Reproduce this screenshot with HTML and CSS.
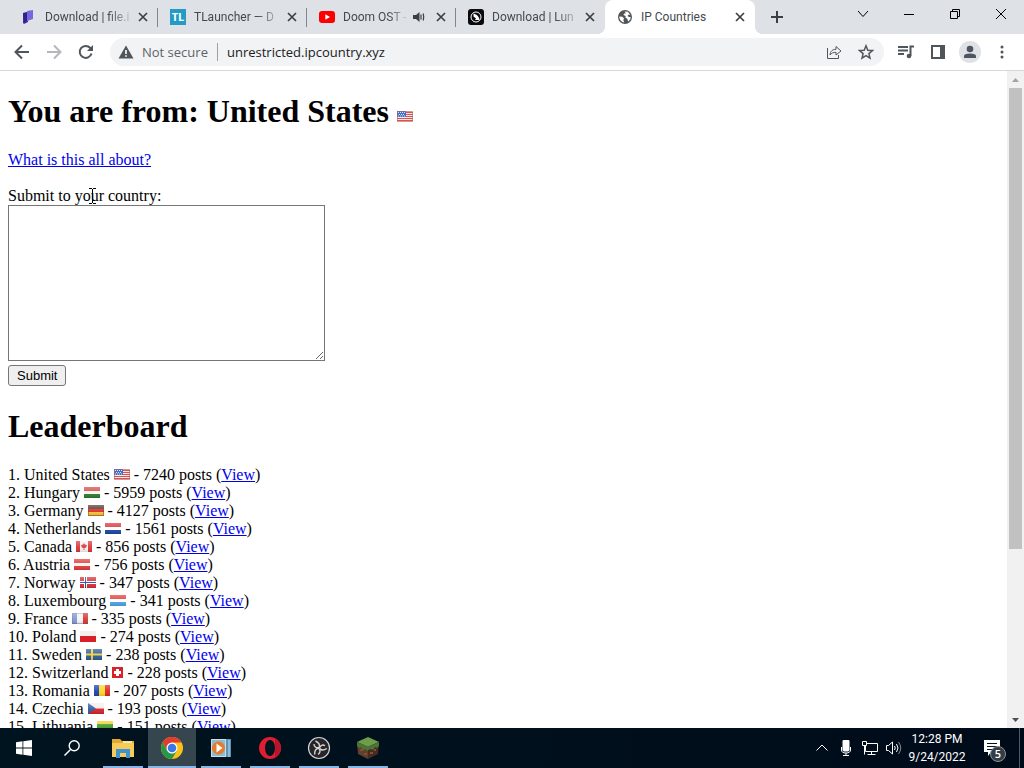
FILE: index.html
```html
<!DOCTYPE html>
<html lang="en">
  <head>
    <meta charset="utf-8">
    <title>IP Countries</title>
    <link rel="stylesheet" href="styles.css">
  </head>
  <body>
    <!-- flags and shared icons -->
    <svg class="sprite" width="0" height="0" aria-hidden="true">
      <defs>
        <linearGradient id="gloss" x1="0" y1="0" x2="0" y2="1">
          <stop offset="0" stop-color="#fff" stop-opacity=".3"/>
          <stop offset=".6" stop-color="#fff" stop-opacity=".05"/>
          <stop offset="1" stop-color="#000" stop-opacity=".12"/>
        </linearGradient>
        <symbol id="close" viewBox="0 0 16 16"><path d="M4 4l8 8M12 4l-8 8" fill="none" stroke="#3c4043" stroke-width="1.7"/></symbol>
        <symbol id="us" viewBox="0 0 16 11">
          <path fill="#f6e9e8" d="M0 0h16v11H0z"/>
          <path d="M0 1.5h16M0 3.5h16M0 5.5h16M0 7.5h16M0 9.5h16" stroke="#e0514d"/>
          <path fill="#3f6fc8" d="M0 0h9v6H0z"/>
          <path d="M1 1.5h7M2 3.5h6M1 5h7" stroke="#dbe6fa" stroke-dasharray="1 1"/>
          <path d="M.5 .5h15v10H.5z" fill="none" stroke="#a76b68" stroke-opacity=".6"/>
        </symbol>
        <symbol id="hu" viewBox="0 0 16 11"><path fill="#d94a43" d="M0 0h16v4H0z"/><path fill="#f4f4f0" d="M0 4h16v3H0z"/><path fill="#2d7a2c" d="M0 7h16v4H0z"/></symbol>
        <symbol id="de" viewBox="0 0 16 11"><path fill="#4a3c38" d="M0 0h16v4H0z"/><path fill="#e02a20" d="M0 4h16v4H0z"/><path fill="#f5c431" d="M0 7h16v4H0z"/><path fill="none" stroke="#8b2a22" stroke-opacity=".5" d="M.5 .5h15v10H.5z"/></symbol>
        <symbol id="nl" viewBox="0 0 16 11"><path fill="#d9343a" d="M0 0h16v4H0z"/><path fill="#fff" d="M0 4h16v3H0z"/><path fill="#1f44a4" d="M0 7h16v4H0z"/></symbol>
        <symbol id="ca" viewBox="0 0 16 11"><path fill="#fbf1f0" d="M0 0h16v11H0z"/><path fill="#d8373b" d="M0 0h4v11H0zM12 0h4v11h-4zM8 2l1 1.5L11 4l-.8 2.5L8.4 7v2h-.8V7L5.8 6.500 5 4l2-.5z"/></symbol>
        <symbol id="at" viewBox="0 0 16 11"><path fill="#e03a3a" d="M0 0h16v4H0zM0 7h16v4H0z"/><path fill="#fdf3f1" d="M0 4h16v3H0z"/></symbol>
        <symbol id="no" viewBox="0 0 16 11"><path fill="#d6303a" d="M0 0h16v11H0z"/><path fill="#fff" d="M4 0h3v11H4zM0 4h16v3H0z"/><path fill="#2a4a9c" d="M5 0h1v11H5zM0 5h16v1H0z"/></symbol>
        <symbol id="lu" viewBox="0 0 16 11"><path fill="#e33b3b" d="M0 0h16v4H0z"/><path fill="#fff" d="M0 4h16v3H0z"/><path fill="#4da3e6" d="M0 7h16v4H0z"/></symbol>
        <symbol id="fr" viewBox="0 0 16 11"><path fill="#7f98d4" d="M0 0h5v11H0z"/><path fill="#f6f3f5" d="M5 0h6v11H5z"/><path fill="#e0332b" d="M11 0h5v11h-5z"/><path fill="none" stroke="#6e6a90" stroke-opacity=".4" d="M.5 .5h15v10H.5z"/></symbol>
        <symbol id="pl" viewBox="0 0 16 11"><path fill="#f4efee" d="M0 0h16v5H0z"/><path fill="#d8202c" d="M0 5h16v6H0z"/></symbol>
        <symbol id="se" viewBox="0 0 16 11"><path fill="#2b5d96" d="M0 0h16v11H0z"/><path fill="#f0cf3c" d="M5 0h2v11H5zM0 4.500h16v2H0z"/></symbol>
        <symbol id="ch" viewBox="0 0 11 11"><path fill="#d8232b" d="M0 0h11v11H0z"/><path fill="#fff" d="M4 2h3v2h2v3H7v2H4V7H2V4h2z"/></symbol>
        <symbol id="ro" viewBox="0 0 16 11"><path fill="#1e40b4" d="M0 0h5v11H0z"/><path fill="#f8d820" d="M5 0h6v11H5z"/><path fill="#dc2420" d="M11 0h5v11h-5z"/></symbol>
        <symbol id="cz" viewBox="0 0 16 11"><path fill="#f3eeee" d="M0 0h16v5.500H0z"/><path fill="#d4222b" d="M0 5.500h16V11H0z"/><path fill="#2f5aa0" d="M0 0l8 5.500L0 11z"/></symbol>
        <symbol id="lt" viewBox="0 0 16 11"><path fill="#f2cf20" d="M0 0h16v4H0z"/><path fill="#3d9a28" d="M0 3h16v5H0z"/><path fill="#c83030" d="M0 8h16v3H0z"/></symbol>
        <symbol id="shine" viewBox="0 0 16 11"><path fill="url(#gloss)" d="M0 0h16v11H0z"/></symbol>
      </defs>
    </svg>

    <header class="browser">
      <div class="tab-strip">
        <div class="tab">
          <svg class="favicon" viewBox="0 0 16 16"><path fill="#4532a8" d="M2 4l5-1v10l-4 2-1-1z"/><path fill="#7468dc" d="M6 2l6-1v9l-6 2z"/><path fill="#281875" d="M2 4l4-1v9l-3 2z" opacity=".6"/></svg>
          <span class="tab-title">Download | file.i</span>
          <button class="tab-close" aria-label="Close tab"><svg><use href="#close"/></svg></button>
        </div>
        <div class="tab">
          <span class="favicon tl">TL</span>
          <span class="tab-title">TLauncher — D</span>
          <button class="tab-close" aria-label="Close tab"><svg><use href="#close"/></svg></button>
        </div>
        <div class="tab">
          <svg class="favicon" viewBox="0 0 16 16"><rect y="2" width="16" height="12" rx="3" fill="#f00"/><path fill="#fff" d="M6.300 5.200v5.600L11 8z"/></svg>
          <span class="tab-title">Doom OST -</span>
          <svg class="audio" viewBox="0 0 12 12"><path fill="#3c4043" d="M0 4h3l3.500-3v10L3 8H0z"/><path fill="none" stroke="#3c4043" stroke-width="1.200" d="M8 3.500v5M10.200 2.500q1 3.500 0 7"/></svg>
          <button class="tab-close" aria-label="Close tab"><svg><use href="#close"/></svg></button>
        </div>
        <div class="tab">
          <svg class="favicon" viewBox="0 0 16 16"><rect width="16" height="16" rx="3" fill="#0b0b0d"/><circle cx="8" cy="8" r="5" fill="none" stroke="#fff"/><path fill="#fff" d="M5.500 4.500L8 5.500q3 1.500 3.500 5.500H7l1-1.500-2.500-2z"/></svg>
          <span class="tab-title">Download | Lun</span>
          <button class="tab-close" aria-label="Close tab"><svg><use href="#close"/></svg></button>
        </div>
        <div class="tab active">
          <svg class="favicon" viewBox="0 0 16 16"><circle cx="8" cy="8" r="7" fill="#50555a"/><path fill="#fff" d="M2.300 7.500l3 .3 1.800 1.700-.8 1.600.9 2.300C4.500 13 2.300 11 2.300 7.500zM7.500 2.500l3.300.2 2.700 3.300-1.700-.4-1.300 1.300 1.500 1 1.700.2-.5 2.300-2 2-.9-2.600-2-1.300.5-1.600-2.400-.8.9-1.600 1.700-.2z"/></svg>
          <span class="tab-title">IP Countries</span>
          <button class="tab-close" aria-label="Close tab"><svg><use href="#close"/></svg></button>
        </div>
        <button class="new-tab" aria-label="New tab"><svg viewBox="0 0 16 16"><path d="M8 2v12M2 8h12" stroke="#3c4043" stroke-width="2"/></svg></button>
        <div class="window-controls">
          <button aria-label="Search tabs"><svg viewBox="0 0 12 12"><path d="M1 3l5 5.500L11 3"/></svg></button>
          <button aria-label="Minimize"><svg viewBox="0 0 12 12"><path d="M1 6.500h10"/></svg></button>
          <button aria-label="Restore"><svg viewBox="0 0 12 12"><path d="M1.500 3.500h7v7h-7zM3.500 3.500v-2h7v7h-2"/></svg></button>
          <button aria-label="Close"><svg viewBox="0 0 12 12"><path d="M1 1l10 10M11 1L1 11"/></svg></button>
        </div>
      </div>

      <div class="toolbar">
        <button class="tool" aria-label="Back"><svg viewBox="0 0 16 16"><path d="M15 8H2M8 1.500L1.500 8 8 14.500"/></svg></button>
        <button class="tool disabled" aria-label="Forward"><svg viewBox="0 0 16 16"><path d="M1 8h13M8 1.500L14.500 8 8 14.500"/></svg></button>
        <button class="tool" aria-label="Reload"><svg viewBox="0 0 16 16"><path d="M13.500 9.500A6 6 0 1 1 12.300 4L14 5.500"/><path class="solid" d="M15 1v6H9z"/></svg></button>
        <div class="omnibox">
          <svg class="warning" viewBox="0 0 16 16"><path fill="#50555a" d="M8 1.500L15.500 14.500H.5z"/><path stroke="#fff" stroke-width="1.600" d="M8 6v4M8 11.200v1.600"/></svg>
          <span class="security">Not secure</span>
          <input class="url" type="text" aria-label="Address" value="unrestricted.ipcountry.xyz">
          <button class="tool" aria-label="Share"><svg class="thin" viewBox="0 0 16 16"><path d="M1.500 4v10.500h11V11M4 11c.3-4 2.700-5.700 6-5.700V2.500L15 7l-5 4V8.300C7.500 8.300 5.500 9 4 11z"/></svg></button>
          <button class="tool" aria-label="Bookmark"><svg class="medium" viewBox="0 0 16 16"><path d="M8 1.800l1.800 4.400 4.700.3-3.600 3.100 1.100 4.600L8 11.700l-4 2.500 1.100-4.600L1.500 6.500l4.700-.3z"/></svg></button>
        </div>
        <button class="tool" aria-label="Media"><svg viewBox="0 0 16 16"><path d="M0 3h10M0 6.500h10M0 10h6M12.500 12V2.500H16"/><circle class="solid" cx="11" cy="12" r="2.300"/></svg></button>
        <button class="tool" aria-label="Side panel"><svg viewBox="0 0 16 16"><path d="M2 2h12v12H2z"/><path class="solid" d="M10 2h4v12h-4z"/></svg></button>
        <button class="tool avatar" aria-label="Profile"><svg viewBox="0 0 22 22"><circle cx="11" cy="11" r="11" fill="#dee1e6"/><circle cx="11" cy="8" r="3.300" fill="#4c5561"/><path fill="#4c5561" d="M5 17v-2q0-2.500 6-2.500t6 2.500v2z"/></svg></button>
        <button class="tool" aria-label="Menu"><svg viewBox="0 0 16 16"><g class="solid"><circle cx="8" cy="3" r="1.500"/><circle cx="8" cy="8" r="1.500"/><circle cx="8" cy="13" r="1.500"/></g></svg></button>
      </div>
    </header>

    <div class="viewport">
      <main class="page">
        <h1>You are from: United States <svg class="flag"><use href="#us"/></svg></h1>
        <p class="about"><a href="#about">What is this all about?</a></p>
        <form>
          <label for="post">Submit to your country:</label>
          <textarea id="post"></textarea>
          <button class="submit" type="button">Submit</button>
        </form>
        <h1>Leaderboard</h1>
        <ul class="leaderboard">
          <li>1. United States <svg class="flag"><use href="#us"/></svg> - 7240 posts (<a href="#us-posts">View</a>)</li>
          <li>2. Hungary <svg class="flag"><use href="#hu"/><use href="#shine"/></svg> - 5959 posts (<a href="#hu-posts">View</a>)</li>
          <li>3. Germany <svg class="flag"><use href="#de"/><use href="#shine"/></svg> - 4127 posts (<a href="#de-posts">View</a>)</li>
          <li>4. Netherlands <svg class="flag"><use href="#nl"/><use href="#shine"/></svg> - 1561 posts (<a href="#nl-posts">View</a>)</li>
          <li>5. Canada <svg class="flag"><use href="#ca"/><use href="#shine"/></svg> - 856 posts (<a href="#ca-posts">View</a>)</li>
          <li>6. Austria <svg class="flag"><use href="#at"/><use href="#shine"/></svg> - 756 posts (<a href="#at-posts">View</a>)</li>
          <li>7. Norway <svg class="flag"><use href="#no"/><use href="#shine"/></svg> - 347 posts (<a href="#no-posts">View</a>)</li>
          <li>8. Luxembourg <svg class="flag"><use href="#lu"/><use href="#shine"/></svg> - 341 posts (<a href="#lu-posts">View</a>)</li>
          <li>9. France <svg class="flag"><use href="#fr"/><use href="#shine"/></svg> - 335 posts (<a href="#fr-posts">View</a>)</li>
          <li>10. Poland <svg class="flag"><use href="#pl"/></svg> - 274 posts (<a href="#pl-posts">View</a>)</li>
          <li>11. Sweden <svg class="flag"><use href="#se"/><use href="#shine"/></svg> - 238 posts (<a href="#se-posts">View</a>)</li>
          <li>12. Switzerland <svg class="flag square"><use href="#ch"/></svg> - 228 posts (<a href="#ch-posts">View</a>)</li>
          <li>13. Romania <svg class="flag"><use href="#ro"/><use href="#shine"/></svg> - 207 posts (<a href="#ro-posts">View</a>)</li>
          <li>14. Czechia <svg class="flag"><use href="#cz"/><use href="#shine"/></svg> - 193 posts (<a href="#cz-posts">View</a>)</li>
          <li>15. Lithuania <svg class="flag"><use href="#lt"/><use href="#shine"/></svg> - 151 posts (<a href="#lt-posts">View</a>)</li>
        </ul>
        <svg class="cursor" viewBox="0 0 7 16"><path d="M0 .5h3M4 .5h3M0 15.500h3M4 15.500h3M3.500 1v14" fill="none" stroke="#000"/></svg>
      </main>
      <div class="scrollbar">
        <svg class="arrow" viewBox="0 0 17 17"><path fill="#a3a3a3" d="M5 11h7L8.500 7z"/></svg>
        <div class="track"><div class="thumb"></div></div>
        <svg class="arrow" viewBox="0 0 17 17"><path fill="#505050" d="M5 7h7l-3.500 4z"/></svg>
      </div>
    </div>

    <footer class="taskbar">
      <button aria-label="Start"><svg class="start" viewBox="0 0 16 16"><path fill="#fff" d="M0 2.300l6.500-1v6.300H0zM7.300 1.200L16 0v7.600H7.300zM0 8.400h6.500v6.300L0 13.700zM7.300 8.400H16V16l-8.700-1.200z"/></svg></button>
      <button aria-label="Search"><svg class="start" viewBox="0 0 16 16"><path d="M6.300 9.700L.5 15.500" stroke="#fff" stroke-width="1.500"/><circle cx="10.200" cy="5.800" r="5" fill="none" stroke="#fff" stroke-width="1.400"/></svg></button>
      <div class="apps">
        <button class="app" aria-label="File Explorer"><svg viewBox="0 0 24 24"><path fill="#e2a82f" d="M1 3h8l2 2h12v5H1z"/><path fill="#f5cb5a" d="M1 7h22v14H1z"/><path fill="#fbe8a0" d="M12 5h9v2h-9z"/><path fill="#3f94d0" d="M5 13h14v9h-4v-5H9v5H5z"/></svg></button>
        <button class="app current" aria-label="Google Chrome"><svg viewBox="0 0 24 24"><circle cx="12" cy="12" r="11" fill="#fbc116"/><path fill="#e33b2e" d="M2.500 6.500A11 11 0 0 1 21.500 6.500H12L7.200 14.700z"/><path fill="#279847" d="M2.500 6.500A11 11 0 0 0 12 23l4.800-8.300L12 17.500l-4.800-2.800z"/><circle cx="12" cy="12" r="5.500" fill="#fff"/><circle cx="12" cy="12" r="4.300" fill="#3977e8"/></svg></button>
        <button class="app" aria-label="Media Player"><svg viewBox="0 0 24 24"><path fill="#5a93b4" d="M5 3h17v18H5z"/><path fill="#8dbbd0" d="M2 3h15v18H2z"/><path fill="none" stroke="#c4e0ec" d="M2.500 3.500h14v17h-14zM20 4v17"/><circle cx="9.500" cy="12" r="6.500" fill="#e87a2c"/><path fill="#fff" d="M7.500 7.500v9l6-4.500z"/></svg></button>
        <button class="app" aria-label="Opera"><svg viewBox="0 0 24 24"><circle cx="12" cy="12" r="11" fill="#e01e30"/><path fill="#b81628" d="M17 2.200a11 11 0 0 1 0 19.600z"/><ellipse cx="12" cy="12" rx="5" ry="8" fill="#00141f"/></svg></button>
        <button class="app" aria-label="OBS"><svg viewBox="0 0 24 24"><circle cx="12" cy="12" r="10.500" fill="#26262a" stroke="#d4d4d4" stroke-width="1.200"/><g fill="none" stroke="#d4d4d4" stroke-width="1.400"><path id="blade" d="M12 11.500C13.500 8.500 11.500 6.500 8.500 5M12 11.500c-3 1-5-1-5-3.500"/><use href="#blade" transform="rotate(120 12 12)"/><use href="#blade" transform="rotate(240 12 12)"/></g></svg></button>
        <button class="app" aria-label="Minecraft"><svg viewBox="0 0 24 24"><path fill="#6d9c4a" d="M12 1l11 5-11 5L1 6z"/><path fill="#5d4030" d="M1 6l11 5v12L2 18z"/><path fill="#442c22" d="M23 6l-11 5v12l10-5z"/><path fill="#4b7534" d="M1 6l11 5v4l-3-2-2 1-2-3-2 1-2-2zM23 6l-11 5v3l3-1 2 1 2-3 2 1 2-2z"/><path fill="#98462a" d="M4 13h3v2H4zM8 17h3v2H8zM14 16h3v2h-3zM18 13h2v2h-2z"/></svg></button>
      </div>
      <div class="tray">
        <button aria-label="Show hidden icons"><svg viewBox="0 0 16 16"><path d="M2.500 10.500L8 5l5.500 5.500"/></svg></button>
        <button aria-label="Microphone"><svg viewBox="0 0 16 16"><rect x="5" y="0" width="6" height="11" rx="1" fill="#fff"/><path d="M3.500 7v3q0 3 4.500 3t4.500-3V7M8 13v2M5 15.500h6"/></svg></button>
        <button aria-label="Network"><svg viewBox="0 0 16 16"><path d="M5 3.500h10.500v8H3.500V6M9.500 11.500v3M5.500 14.500h8M.5 1.500h4v4h-4zM2.500 5.500v9"/></svg></button>
        <button aria-label="Volume"><svg viewBox="0 0 16 16"><path d="M.5 5.500h2l4-3.500v12l-4-3.500h-2zM8.500 6q1.500 2 0 4M10.500 4q3 4 0 8"/><path d="M12.500 2q4.500 6 0 12" opacity=".5"/></svg></button>
        <div class="clock"><span>12:28 PM</span><span>9/24/2022</span></div>
        <button class="notifications" aria-label="Notifications"><svg viewBox="0 0 18 18"><path fill="#fff" d="M1 1h16v12H8l-3 4v-4H1z"/><path stroke="#00101c" d="M4 4.500h10M4 7.500h10M4 10.500h7"/></svg><span class="count">5</span></button>
      </div>
    </footer>
  </body>
</html>
```
FILE: styles.css
```css
* {
  box-sizing: border-box;
}
body {
  margin: 0;
  height: 100vh;
  display: flex;
  flex-direction: column;
  overflow: hidden;
  background: white;
  font-family: "Liberation Serif", serif;
  font-size: 16px;
  line-height: 18px;
}
button {
  font-family: inherit;
}
.sprite {
  position: absolute;
}

/* browser window */
.browser {
  flex: none;
  font-family: "Open Sans", sans-serif;
}
.browser button,
.taskbar button {
  border: 0;
  padding: 0;
  background: none;
  display: flex;
  align-items: center;
  justify-content: center;
}
.tab-strip {
  display: flex;
  height: 34px;
  padding-left: 9px;
  background: #dee1e6;
}
.tab {
  flex: 0 1 149px;
  min-width: 0;
  display: flex;
  align-items: center;
  padding: 0 7px 0 12px;
  background: linear-gradient(#80868b, #80868b) right center / 1px 19px no-repeat;
}
.tab:nth-child(4) {
  background: none;
}
.tab.active {
  flex-basis: 150px;
  background: white;
  border-radius: 8px 8px 0 0;
  position: relative;
}
.tab.active::before,
.tab.active::after {
  content: "";
  position: absolute;
  bottom: 0;
  width: 8px;
  height: 8px;
}
.tab.active::before {
  right: 100%;
  background: radial-gradient(circle at 0 0, transparent 8px, white 8px);
}
.tab.active::after {
  left: 100%;
  background: radial-gradient(circle at 100% 0, transparent 8px, white 8px);
}
.favicon {
  flex: none;
  width: 16px;
  height: 16px;
}
.tl {
  background: #249bc4;
  color: white;
  font-size: 11px;
  font-weight: 700;
  line-height: 16px;
  text-align: center;
}
.tab-title {
  flex: 1;
  margin-left: 8px;
  overflow: hidden;
  white-space: nowrap;
  color: #45494d;
  font-family: Roboto, sans-serif;
  font-size: 12px;
  mask-image: linear-gradient(to right, black 70%, transparent);
}
.active .tab-title {
  mask-image: none;
}
.audio {
  flex: none;
  width: 12px;
  height: 12px;
  margin: 0 8px 0 4px;
}
.tab-close,
.tab-close svg {
  flex: none;
  width: 16px;
  height: 16px;
}
.new-tab {
  width: 44px;
}
.new-tab svg {
  width: 16px;
  height: 16px;
}
.window-controls {
  display: flex;
  margin-left: auto;
}
.window-controls button {
  width: 46px;
  height: 28px;
}
.window-controls svg {
  width: 12px;
  height: 12px;
  fill: none;
  stroke: black;
}
.toolbar {
  display: flex;
  align-items: center;
  height: 37px;
  padding: 0 6px;
  background: white;
  border-bottom: 1px solid #d5d7da;
}
.tool {
  flex: none;
  width: 32px;
  height: 28px;
}
.tool svg {
  width: 16px;
  height: 16px;
  fill: none;
  stroke: #50555a;
  stroke-width: 2;
}
.tool svg.thin {
  stroke-width: 1;
}
.tool svg.medium {
  stroke-width: 1.5;
}
.tool.disabled svg {
  stroke: #b5b7ba;
}
.tool .solid {
  fill: #50555a;
  stroke: none;
}
.tool.avatar svg {
  width: 22px;
  height: 22px;
  stroke: none;
}
.omnibox {
  flex: 1;
  min-width: 0;
  display: flex;
  align-items: center;
  height: 28px;
  margin: 0 6px 0 8px;
  padding: 0 2px 0 8px;
  border-radius: 14px;
  background: #f1f3f4;
  font-size: 13px;
}
.warning {
  flex: none;
  width: 16px;
  height: 16px;
}
.security {
  flex: none;
  margin-left: 8px;
  padding-right: 9px;
  border-right: 1px solid #9aa0a6;
  color: #5f6368;
}
.url {
  flex: 1;
  min-width: 0;
  border: 0;
  padding: 0 0 0 9px;
  background: none;
  color: #202124;
  font: inherit;
}

/* page */
.viewport {
  flex: 1;
  min-height: 0;
  display: flex;
}
.page {
  flex: 1;
  min-width: 0;
  padding: 0 8px;
  overflow: hidden;
  position: relative;
}
h1 {
  margin: 21px 0;
  font-size: 32px;
  line-height: 38px;
}
a {
  color: #0000ee;
}
.about {
  margin: 0 0 18px;
}
label {
  display: block;
}
textarea {
  display: block;
  width: 317px;
  max-width: 100%;
  height: 156px;
  margin-bottom: 4px;
  border: 1px solid #767676;
}
.submit {
  display: block;
  height: 21px;
  padding: 0 8px;
  border: 1px solid #767676;
  border-radius: 3px;
  background: #efefef;
  color: black;
  font-family: "Liberation Sans", sans-serif;
  font-size: 13px;
}
.leaderboard {
  margin: 0;
  padding: 0;
  list-style: none;
}
.flag {
  width: 16px;
  height: 11px;
}
.flag.square {
  width: 11px;
}
.cursor {
  position: absolute;
  left: 89px;
  top: 117px;
  width: 7px;
  height: 16px;
}
.scrollbar {
  flex: none;
  width: 17px;
  display: flex;
  flex-direction: column;
  background: #f1f1f1;
}
.arrow {
  width: 17px;
  height: 17px;
}
.track {
  flex: 1;
  padding: 0 2px;
}
.thumb {
  height: 74%;
  background: #c1c1c1;
}

/* taskbar */
.taskbar {
  flex: none;
  display: flex;
  height: 40px;
  background: linear-gradient(to right, #00141f, #000b1a);
  color: white;
  font-family: "Open Sans", sans-serif;
}
.taskbar button {
  width: 48px;
}
.taskbar .start {
  width: 16px;
  height: 16px;
}
.apps {
  display: flex;
  gap: 1px;
  margin-left: 3px;
}
.app svg {
  width: 24px;
  height: 24px;
}
.taskbar .app {
  background: linear-gradient(#85b6e6, #85b6e6) center bottom / 40px 2px no-repeat;
}
.taskbar .app.current {
  background: linear-gradient(#85b6e6, #85b6e6) center bottom / 48px 2px no-repeat #36464f;
}
.tray {
  display: flex;
  margin-left: auto;
  padding-right: 4px;
}
.tray button {
  width: 24px;
}
.tray svg {
  width: 16px;
  height: 16px;
  fill: none;
  stroke: white;
}
.clock {
  display: flex;
  flex-direction: column;
  justify-content: center;
  width: 62px;
  text-align: center;
  font-family: Roboto, sans-serif;
  font-size: 12px;
}
.tray .notifications {
  position: relative;
  width: 52px;
  padding-right: 4px;
  border-right: 1px solid #4d5963;
}
.notifications svg {
  width: 18px;
  height: 18px;
  stroke: none;
}
.count {
  position: absolute;
  left: 22px;
  top: 18px;
  width: 16px;
  height: 16px;
  border: 1px solid #8b9298;
  border-radius: 50%;
  background: #343c44;
  color: white;
  font-size: 11px;
  font-weight: 600;
  line-height: 14px;
}
```
